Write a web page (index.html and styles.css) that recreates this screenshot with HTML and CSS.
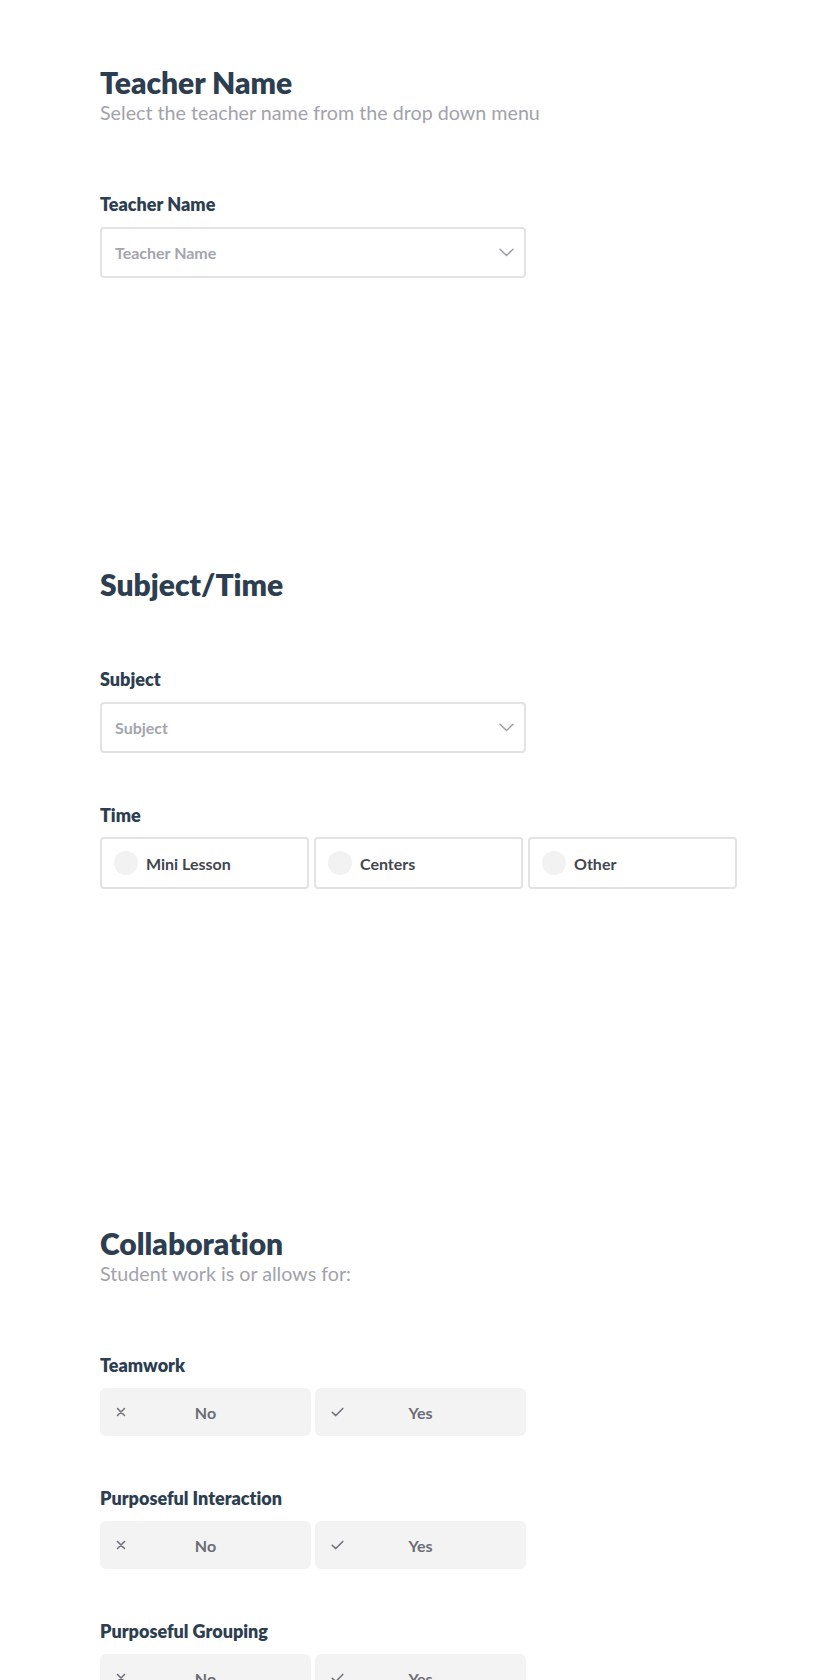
FILE: index.html
```html
<!DOCTYPE html>
<html lang="en">
<head>
<meta charset="utf-8">
<title>Classroom Observation</title>
<link rel="stylesheet" href="styles.css">
</head>
<body>
<main class="page">
  <section class="section section--first">
    <header class="section-head">
      <h1 class="section-title">Teacher Name</h1>
      <p class="section-sub">Select the teacher name from the drop down menu</p>
    </header>
    <div class="field">
      <div class="field-label">Teacher Name</div>
      <div class="select">
        <span class="select-placeholder">Teacher Name</span>
        <svg class="chevron" width="15" height="9" viewBox="0 0 15 9"><path d="M1 1.2l6.5 6.3 6.5-6.3" fill="none" stroke="#9a9ca4" stroke-width="1.4" stroke-linecap="round" stroke-linejoin="round"/></svg>
      </div>
    </div>
  </section>

  <section class="section section--second">
    <header class="section-head section-head--plain">
      <h1 class="section-title">Subject/Time</h1>
    </header>
    <div class="field">
      <div class="field-label">Subject</div>
      <div class="select">
        <span class="select-placeholder">Subject</span>
        <svg class="chevron" width="15" height="9" viewBox="0 0 15 9"><path d="M1 1.2l6.5 6.3 6.5-6.3" fill="none" stroke="#9a9ca4" stroke-width="1.4" stroke-linecap="round" stroke-linejoin="round"/></svg>
      </div>
    </div>
    <div class="field">
      <div class="field-label">Time</div>
      <div class="radio-row">
        <div class="radio"><span class="radio-dot"></span><span class="radio-text">Mini Lesson</span></div>
        <div class="radio"><span class="radio-dot"></span><span class="radio-text">Centers</span></div>
        <div class="radio"><span class="radio-dot"></span><span class="radio-text">Other</span></div>
      </div>
    </div>
  </section>

  <section class="section">
    <header class="section-head">
      <h1 class="section-title">Collaboration</h1>
      <p class="section-sub">Student work is or allows for:</p>
    </header>
    <div class="field">
      <div class="field-label">Teamwork</div>
      <div class="yn-row">
        <div class="yn"><svg class="yn-icon" width="10" height="10" viewBox="0 0 10 10"><path d="M1.5 1.5l7 7M8.5 1.5l-7 7" stroke="#6e6f78" stroke-width="1.5" stroke-linecap="round"/></svg><span class="yn-text">No</span></div>
        <div class="yn"><svg class="yn-icon" width="13" height="10" viewBox="0 0 13 10"><path d="M1.2 5.2l3.6 3.4 7-7.2" fill="none" stroke="#6e6f78" stroke-width="1.5" stroke-linecap="round" stroke-linejoin="round"/></svg><span class="yn-text">Yes</span></div>
      </div>
    </div>
    <div class="field">
      <div class="field-label">Purposeful Interaction</div>
      <div class="yn-row">
        <div class="yn"><svg class="yn-icon" width="10" height="10" viewBox="0 0 10 10"><path d="M1.5 1.5l7 7M8.5 1.5l-7 7" stroke="#6e6f78" stroke-width="1.5" stroke-linecap="round"/></svg><span class="yn-text">No</span></div>
        <div class="yn"><svg class="yn-icon" width="13" height="10" viewBox="0 0 13 10"><path d="M1.2 5.2l3.6 3.4 7-7.2" fill="none" stroke="#6e6f78" stroke-width="1.5" stroke-linecap="round" stroke-linejoin="round"/></svg><span class="yn-text">Yes</span></div>
      </div>
    </div>
    <div class="field">
      <div class="field-label">Purposeful Grouping</div>
      <div class="yn-row">
        <div class="yn"><svg class="yn-icon" width="10" height="10" viewBox="0 0 10 10"><path d="M1.5 1.5l7 7M8.5 1.5l-7 7" stroke="#6e6f78" stroke-width="1.5" stroke-linecap="round"/></svg><span class="yn-text">No</span></div>
        <div class="yn"><svg class="yn-icon" width="13" height="10" viewBox="0 0 13 10"><path d="M1.2 5.2l3.6 3.4 7-7.2" fill="none" stroke="#6e6f78" stroke-width="1.5" stroke-linecap="round" stroke-linejoin="round"/></svg><span class="yn-text">Yes</span></div>
      </div>
    </div>
  </section>
</main>
</body>
</html>
```

FILE: styles.css
```css
* { box-sizing: border-box; }

html, body {
  margin: 0;
  padding: 0;
  background: #ffffff;
}

body {
  font-family: Lato, "Open Sans", "Liberation Sans", sans-serif;
  font-variant-ligatures: no-common-ligatures;
  color: #2c3e50;
}

.page {
  padding: 64px 0 0 100px;
}

.section--first { padding-bottom: 288px; }
.section--second { padding-bottom: 336px; }

.section-head {
  margin-bottom: 69px;
}

.section-head--plain {
  margin-bottom: 67px;
}

.section-title {
  margin: 0;
  font-size: 30px;
  line-height: 36px;
  font-weight: 800;
  color: #2c3e50;
}

.section-sub {
  margin: 1px 0 0;
  font-size: 19.7px;
  line-height: 24px;
  font-weight: 400;
  color: #a2a2ab;
}

.field + .field {
  margin-top: 52px;
}

.field-label {
  font-size: 18px;
  line-height: 20px;
  font-weight: 800;
  color: #2c3e50;
  margin-bottom: 13px;
}

.select {
  width: 426px;
  height: 51px;
  border: 2px solid #e3e3e5;
  border-radius: 4px;
  display: flex;
  align-items: center;
  justify-content: space-between;
  padding: 0 10px 0 13px;
  background: #fff;
}

.select-placeholder {
  font-size: 16px;
  font-weight: 700;
  color: #a4a5ad;
}

.chevron { display: block; }

.radio-row {
  display: grid;
  grid-template-columns: repeat(3, 209px);
  gap: 5px;
  margin-top: -1px;
}

.radio {
  height: 52px;
  border: 2px solid #e3e3e5;
  border-radius: 4px;
  display: flex;
  align-items: center;
  padding-left: 12px;
  gap: 8px;
}

.radio-dot {
  width: 24px;
  height: 24px;
  border-radius: 50%;
  background: #f2f2f3;
  flex: none;
}

.radio-text {
  font-size: 16px;
  font-weight: 700;
  color: #42464f;
}

.yn-row {
  display: grid;
  grid-template-columns: repeat(2, 211px);
  gap: 4px;
}

.yn {
  height: 48px;
  border-radius: 6px;
  background: #f3f3f4;
  display: grid;
  grid-template-columns: 1fr auto 1fr;
  align-items: center;
  padding: 0 16px;
}

.yn-icon {
  display: block;
  justify-self: start;
}

.yn-text {
  font-size: 16px;
  font-weight: 700;
  color: #6b6c75;
}
```
